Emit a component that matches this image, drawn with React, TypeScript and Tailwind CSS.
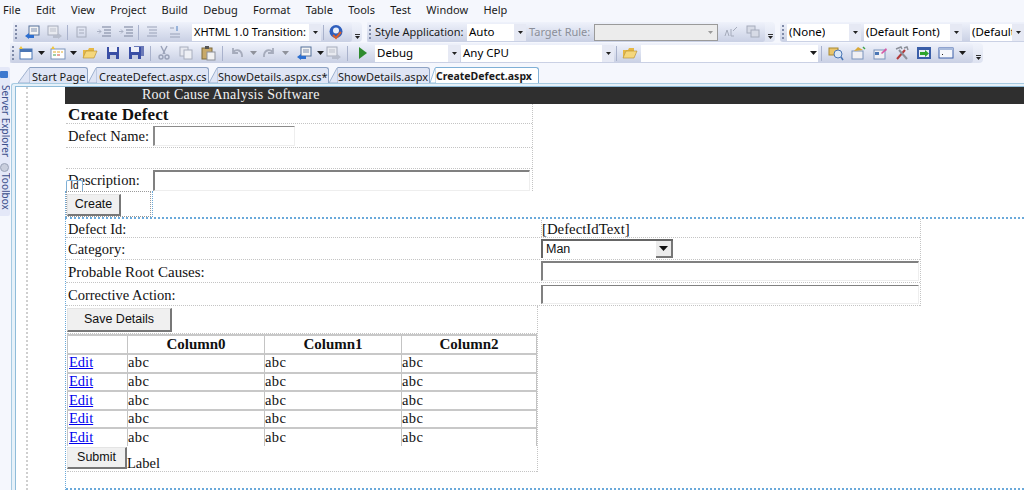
import React from 'react'

const menus = ['File', 'Edit', 'View', 'Project', 'Build', 'Debug', 'Format', 'Table', 'Tools', 'Test', 'Window', 'Help']

const tabs = [
  { label: 'Start Page', w: 'w-[70px]', slant: 12, pl: 'pl-[2px]' },
  { label: 'CreateDefect.aspx.cs', w: 'w-[121px]', slant: 9, pl: 'pl-[2px]' },
  { label: 'ShowDetails.aspx.cs*', w: 'w-[120px]', slant: 9, pl: 'pl-0' },
  { label: 'ShowDetails.aspx', w: 'w-[101px]', slant: 9, pl: 'pl-0' },
]

const rows = [0, 1, 2, 3, 4]

function Handle() {
  return <div className="w-[3px] h-[14px] mx-[2px] shrink-0 border-l-2 border-dotted border-[#7f8aa8]" />
}

function Sep({ cls = 'mx-[3px]' }: { cls?: string }) {
  return <div className={`w-px h-[15px] bg-[#a9b2cc] shrink-0 ${cls}`} />
}

function Caret() {
  return (
    <svg width="7" height="4" viewBox="0 0 7 4" className="shrink-0">
      <path d="M0 0h7L3.5 4z" fill="#1c1c1c" />
    </svg>
  )
}

function Overflow() {
  return (
    <div className="w-[10px] h-full shrink-0 flex flex-col items-center justify-end gap-[1px] pb-[3px]">
      <div className="w-[5px] h-px bg-[#333]" />
      <svg width="5" height="3" viewBox="0 0 5 3"><path d="M0 0h5L2.500 3z" fill="#222" /></svg>
    </div>
  )
}

function Strip({ w, children }: { w: string; children: React.ReactNode }) {
  return (
    <div className={`h-full rounded-r-[4px] bg-gradient-to-b from-[#f0f3fb] to-[#dde2f0] flex shrink-0 ${w}`}>
      <div className="flex-1 min-w-0 h-full rounded-[3px] bg-gradient-to-b from-[#eff2fb] to-[#c9d0e4] flex items-center">
        {children}
      </div>
      <Overflow />
    </div>
  )
}

function Combo({ text, w, color = 'text-black', size = 'text-[11.5px]' }: { text: string; w: string; color?: string; size?: string }) {
  return (
    <div className={`h-[17px] bg-white flex items-center justify-between shrink-0 ${w}`}>
      <span className={`pl-[2px] ${size} ${color} whitespace-nowrap overflow-hidden`}>{text}</span>
      <div className="w-[12px] h-[17px] bg-[#e6e9f4] flex items-center justify-center shrink-0">
        <svg width="5" height="3" viewBox="0 0 5 3"><path d="M0 0h5L2.5 3z" fill="#222" /></svg>
      </div>
    </div>
  )
}

function Ico({ children, w = 'w-[22px]' }: { children: React.ReactNode; w?: string }) {
  return (
    <div className={`h-[16px] flex items-center justify-center shrink-0 ${w}`}>
      <svg width="16" height="16" viewBox="0 0 16 16">{children}</svg>
    </div>
  )
}

const NavBack = () => (
  <>
    <rect x="5" y="2" width="10" height="9" fill="#f4f4f4" stroke="#55709a" />
    <path d="M7 5h6M7 7h6" stroke="#7c8fb0" />
    <path d="M1 12l4-3v2h5v3H5v1z" fill="#2d6fd0" />
  </>
)

const NavFwdGrey = () => (
  <>
    <rect x="1" y="2" width="10" height="9" fill="#e8eaf0" stroke="#a6acbc" />
    <path d="M3 5h6M3 7h6" stroke="#bbbfca" />
    <path d="M15 12l-4-3v2H6v3h5v1z" fill="#b7bdcc" />
  </>
)

const Indent = () => (
  <>
    <path d="M6 3h9M8 6h7M8 9h7M6 12h9" stroke="#9aa2b8" strokeWidth="1.3" />
    <path d="M1 7.500h4M3 5.500l2 2-2 2" stroke="#aab1c4" fill="none" />
  </>
)

const Lines = () => <path d="M3 3h10M5 6h8M5 9h8M3 12h10" stroke="#9aa2b8" strokeWidth="1.2" />

const Folder = () => (
  <>
    <path d="M1 5h5l1-2h5v3H4L1 13z" fill="#e6b845" />
    <path d="M1 13l3-7h11l-3 7z" fill="#f5d77c" stroke="#b68a25" strokeWidth=".6" />
  </>
)

const Floppy = ({ x = 0 }: { x?: number }) => (
  <g transform={`translate(${x} 0)`}>
    <rect x="2" y="2" width="12" height="12" fill="#3a4fa5" />
    <rect x="4" y="2" width="8" height="5" fill="#eef0f8" />
    <rect x="5" y="10" width="6" height="4" fill="#c7cde0" />
  </g>
)

function DefectPanelRow({ children, cls }: { children?: React.ReactNode; cls: string }) {
  return <div className={`flex items-center border-b border-dotted border-[#c4c4c4] ${cls}`}>{children}</div>
}

function WinButton({ label, w, h }: { label: string; w: string; h: string }) {
  return (
    <div className={`bg-[#f0f0f0] flex items-center justify-center text-[12.5px] text-[#111] font-['Liberation_Sans',sans-serif] border-t border-l border-[#e4e4e4] border-r-2 border-b-2 border-r-[#777] border-b-[#777] ${w} ${h}`}>
      {label}
    </div>
  )
}

function Cell({ children, cls = '' }: { children?: React.ReactNode; cls?: string }) {
  return <div className={`border-l border-[#c4c4c4] flex items-center ${cls}`}>{children}</div>
}

export default function App() {
  return (
    <div className="w-[1024px] h-[490px] overflow-hidden bg-[#f5f7fd] font-['Noto_Sans',sans-serif] text-[#1a1a1a] flex flex-col">
      {/* Menu */}
      <div className="h-[20px] flex items-center gap-[15.3px] pl-[3px] text-[11px] shrink-0">
        {menus.map((m) => <span key={m}>{m}</span>)}
      </div>

      {/* Toolbar row 1 */}
      <div className="h-[20px] mt-[2px] flex items-center shrink-0 pl-[13px] gap-[5px]">
        <Strip w="w-[349px]">
          <Handle />
          <Ico w="w-[24px]"><NavBack /></Ico>
          <Ico w="w-[22px]"><NavFwdGrey /></Ico>
          <Sep cls="mx-[1px]" />
          <Ico w="w-[24px]"><rect x="4" y="3" width="9" height="10" fill="none" stroke="#a6acbc" /><path d="M6 6h5M6 9h5" stroke="#a6acbc" /></Ico>
          <Ico w="w-[22px]"><Indent /></Ico>
          <Ico w="w-[22px]"><Indent /></Ico>
          <Sep cls="mx-[1px]" />
          <Ico w="w-[24px]"><Lines /></Ico>
          <Ico w="w-[22px]"><path d="M3 4h4M3 10h10M3 13h10" stroke="#9aa2b8" strokeWidth="1.2" /><path d="M10 2v5" stroke="#4c7fc0" /></Ico>
          <div className="w-[6px]" />
          <Combo text="XHTML 1.0 Transition:" w="w-[129px]" size="text-[11px]" />
          <Sep cls="mx-[2px]" />
          <Ico w="w-[20px]">
            <circle cx="8" cy="7.500" r="6.500" fill="#2f5fbd" />
            <circle cx="8" cy="6.500" r="3" fill="#e8eefa" />
            <path d="M5 11l3 3 5-6" stroke="#d8602c" strokeWidth="2" fill="none" />
          </Ico>
        </Strip>
        <Strip w="w-[408px]">
          <Handle />
          <span className="text-[11px] whitespace-nowrap w-[93px] pl-[1px]">Style Application:</span>
          <Combo text="Auto" w="w-[59px]" />
          <span className="text-[11px] text-[#8b8f99] whitespace-nowrap w-[68px] pl-[3px]">Target Rule:</span>
          <div className="w-[124px] h-[17px] bg-[#ececec] border border-[#9a9a9a] flex justify-end items-center pr-[4px] shrink-0">
            <svg width="5" height="3" viewBox="0 0 5 3"><path d="M0 0h5L2.5 3z" fill="#9a9a9a" /></svg>
          </div>
          <Ico w="w-[24px]"><path d="M3 12l2-6 2 6M9 5v7h3" stroke="#a6acbc" fill="none" /><path d="M11 7l4-4" stroke="#a6acbc" /></Ico>
          <Ico w="w-[22px]"><rect x="2" y="2" width="8" height="7" fill="#d7dbe6" stroke="#a6acbc" /><rect x="6" y="6" width="8" height="7" fill="#d7dbe6" stroke="#a6acbc" /></Ico>
        </Strip>
        <div className="h-full flex-1 rounded-l-[3px] bg-gradient-to-b from-[#eff2fb] to-[#c9d0e4] flex items-center">
          <Handle />
          <Combo text="(None)" w="w-[74px]" />
          <div className="w-[3px]" />
          <Combo text="(Default Font)" w="w-[98px]" />
          <div className="w-[8px]" />
          <Combo text="(Default" w="w-[54px]" />
        </div>
      </div>

      {/* Toolbar row 2 */}
      <div className="h-[20px] mt-[1px] ml-[10px] shrink-0">
        <Strip w="w-[973px]">
          <Handle />
          <Ico w="w-[17px]"><rect x="2" y="4" width="12" height="10" fill="#fff" stroke="#4a76b5" /><rect x="2" y="4" width="12" height="3" fill="#4a76b5" /><path d="M1 4l2-3 2 3z" fill="#efc437" /></Ico>
          <div className="w-[14px] flex justify-center"><Caret /></div>
          <Ico w="w-[20px]"><rect x="1" y="4" width="14" height="10" fill="#fff" stroke="#7a93bb" /><path d="M3 7h3M7 7h3M11 7h2" stroke="#e3a92c" /><path d="M3 10h3" stroke="#3fa34a" /><path d="M7 10h3" stroke="#d24b3f" /><path d="M1 4l2-3 2 3z" fill="#efc437" /></Ico>
          <div className="w-[11px] flex justify-center"><Caret /></div>
          <Ico w="w-[22px]"><Folder /></Ico>
          <Ico w="w-[24px]"><Floppy /></Ico>
          <Ico w="w-[23px]"><rect x="5" y="1" width="10" height="10" fill="#6a79b8" /><Floppy x={-2} /></Ico>
          <Sep cls="mx-[2px]" />
          <Ico w="w-[22px]"><path d="M5 1l4 8M11 1L7 9" stroke="#9aa2b8" strokeWidth="1.4" /><circle cx="5" cy="12" r="2" fill="none" stroke="#9aa2b8" strokeWidth="1.4" /><circle cx="11" cy="12" r="2" fill="none" stroke="#9aa2b8" strokeWidth="1.4" /></Ico>
          <Ico w="w-[21px]"><rect x="2" y="2" width="8" height="9" fill="#e7e9f0" stroke="#a8aebd" /><rect x="6" y="5" width="8" height="9" fill="#eef0f5" stroke="#a8aebd" /></Ico>
          <Ico w="w-[23px]"><rect x="2" y="3" width="10" height="11" fill="#c8a969" stroke="#7d6a3d" /><rect x="5" y="1" width="4" height="3" fill="#555" /><rect x="7" y="7" width="8" height="8" fill="#f2f2f2" stroke="#8b8f99" /></Ico>
          <Sep cls="mx-[3px]" />
          <Ico w="w-[22px]"><path d="M4 3v5h5M4 8c2-4 8-4 9 2v2" fill="none" stroke="#a6acbc" strokeWidth="1.8" /></Ico>
          <div className="w-[10px] flex justify-center opacity-40"><Caret /></div>
          <Ico w="w-[21px]"><path d="M12 3v5H7M12 8c-2-4-8-4-9 2v2" fill="none" stroke="#a6acbc" strokeWidth="1.8" /></Ico>
          <div className="w-[13px] flex justify-center opacity-40"><Caret /></div>
          <Ico w="w-[24px]"><NavBack /></Ico>
          <div className="w-[8px] flex justify-center"><Caret /></div>
          <Ico w="w-[20px]"><NavFwdGrey /></Ico>
          <Sep cls="ml-[3px] mr-[1px]" />
          <Ico w="w-[26px]"><path d="M5 2l8 6-8 6z" fill="#2e8b2e" /></Ico>
          <Combo text="Debug" w="w-[85px]" />
          <div className="w-px" />
          <Combo text="Any CPU" w="w-[153px]" />
          <Sep cls="mx-[2px]" />
          <Ico w="w-[22px]"><Folder /></Ico>
          <div className="h-[17px] w-[177px] bg-white flex items-center justify-end shrink-0">
            <div className="w-[10px] flex justify-center"><Caret /></div>
          </div>
          <Sep cls="mx-[3px]" />
          <Ico w="w-[22px]"><rect x="1" y="3" width="9" height="7" fill="#e9c46a" stroke="#a98a32" /><circle cx="10" cy="9" r="4" fill="#dbe8f6" stroke="#4a76b5" /><path d="M13 12l2 3" stroke="#4a76b5" strokeWidth="1.5" /></Ico>
          <Ico w="w-[22px]"><rect x="2" y="6" width="11" height="8" fill="#f0f0f4" stroke="#7a93bb" /><path d="M4 6l4-4 5 3" fill="#d9a93a" /><path d="M13 2l2 2" stroke="#3fa34a" strokeWidth="1.5" /></Ico>
          <Ico w="w-[22px]"><rect x="2" y="5" width="11" height="9" fill="#f0f0f4" stroke="#7a93bb" /><path d="M3 7h4v3H3z" fill="#4a76b5" /><path d="M9 8l5-5 1 2-5 4z" fill="#d55aa5" /></Ico>
          <Ico w="w-[22px]"><path d="M3 14l8-9" stroke="#b33a3a" strokeWidth="2" /><path d="M13 14L5 5" stroke="#8b8f99" strokeWidth="2" /><path d="M2 4l5-2 1 2M10 3l3-1 1 3" stroke="#8b8f99" fill="none" strokeWidth="1.4" /></Ico>
          <Ico w="w-[22px]"><rect x="1" y="2" width="14" height="12" fill="#3a5ea8" /><rect x="3" y="5" width="10" height="7" fill="#e9eef8" /><path d="M4 7h5V5l4 3.500-4 3.500V10H4z" fill="#2ea52e" /></Ico>
          <Ico w="w-[22px]"><rect x="1" y="3" width="14" height="10" fill="#f5f7fc" stroke="#3a5ea8" /><path d="M1 3h14v2H1z" fill="#a9bbdc" /><path d="M4 9h1v1H4z" fill="#222" /></Ico>
          <div className="w-[11px] flex justify-center"><Caret /></div>
        </Strip>
      </div>

      <div className="flex-1 flex min-h-0 mt-[4px]">
        {/* Docked panes */}
        <div className="w-[10px] h-[149px] shrink-0 bg-[#e4e8f8] rounded-r-[2px] flex flex-col overflow-hidden text-[10px] leading-[9px] text-[#3b4f8c]">
          <div className="h-[18px] shrink-0 pt-[4px]">
            <div className="w-[8px] h-[7px] bg-[#3d78cf] rounded-[1px]" />
          </div>
          <span className="h-[78px] whitespace-nowrap [writing-mode:vertical-rl]">Server Explorer</span>
          <div className="w-[9px] h-[9px] rounded-full bg-[#c9cedd] border border-[#9aa2b8] shrink-0" />
          <span className="pt-[1px] whitespace-nowrap [writing-mode:vertical-rl]">Toolbox</span>
        </div>

        <div className="flex-1 min-w-0 flex flex-col pl-px">
          {/* Tabs */}
          <div className="relative z-10 h-[16px] pl-[7px] flex items-end shrink-0 text-[11px]">
            {tabs.map((t) => (
              <div key={t.label} className={`h-[16px] flex items-end shrink-0 ${t.w}`}>
                <svg width={t.slant} height="16" viewBox={`0 0 ${t.slant} 16`} className="shrink-0">
                  <path d={`M0 16L${t.slant - 1} 1q.5-.5 1-.5V16z`} fill="#dfe5f5" stroke="#8ea3c4" strokeWidth=".8" />
                </svg>
                <div className={`flex-1 min-w-0 h-[16px] bg-[#dfe5f5] border-t border-r border-[#8ea3c4] rounded-tr-[3px] whitespace-nowrap leading-[17px] ${t.pl}`}>
                  {t.label}
                </div>
              </div>
            ))}
            <div className="h-[16px] w-[109px] flex items-end shrink-0">
              <svg width="6" height="16" viewBox="0 0 6 16" className="shrink-0">
                <path d="M0 16L5 1q.5-.5 1-.5V16z" fill="#fff" stroke="#7fb0d6" strokeWidth=".8" />
              </svg>
              <div className="flex-1 min-w-0 h-[16px] bg-white border-t border-r border-[#7fb0d6] rounded-tr-[3px] font-bold text-[10.5px] whitespace-nowrap leading-[17px]">
                CreateDefect.aspx
              </div>
            </div>
          </div>

          {/* Editor frame */}
          <div className="flex-1 min-h-0 flex border-t border-l border-[#a7cbe2] rounded-tl-[3px] bg-[#e6f1f9] pl-[3px] pt-[2px]">
            <div className="flex-1 min-w-0 border-t border-l border-[#8fbcd9] bg-white pl-[10px]">
              {/* Design surface */}
              <div className="h-full border-l-2 border-dotted border-[#cfcfcf] pl-[37px] font-['Liberation_Serif',serif] text-[14.5px] text-[#111]">
                <div className="h-[17px] bg-[#2f2f2f] text-[#f2f2f2] text-[14px] pl-[77px] leading-[16px] whitespace-nowrap tracking-[0.25px]">Root Cause Analysis Software</div>

                {/* Create defect table */}
                <div className="w-[467px] ml-[1px] border-r border-dotted border-[#c4c4c4]">
                  <DefectPanelRow cls="h-[20px] pl-[2px] pt-[3px] font-bold text-[17px] tracking-[0.1px]">Create Defect</DefectPanelRow>
                  <DefectPanelRow cls="h-[24px] pl-[2px]">
                    <span className="w-[85px] pt-[3px] whitespace-nowrap">Defect Name:</span>
                    <div className="w-[142px] h-[20px] border-l-2 border-t border-[#8a8a8a] border-r border-b border-r-[#eeeeee] border-b-[#eeeeee]" />
                  </DefectPanelRow>
                  <DefectPanelRow cls="h-[21px]" />
                  <div className="h-[22px] flex pl-[2px] relative">
                    <span className="w-[85px] leading-[18px] mt-[2px]">Description:</span>
                    <div className="w-[377px] h-[21px] mt-[1px] border-l-2 border-t-2 border-[#808080] border-r border-b border-r-[#eeeeee] border-b-[#eeeeee]" />
                    <div className="absolute left-0 top-[11px] w-[17px] h-[11px] bg-white border border-b-0 border-[#7fb0d6] rounded-t-[2px] text-[10px] leading-[10px] text-center font-['Liberation_Sans',sans-serif]">Id</div>
                  </div>
                </div>

                {/* Button panel */}
                <div className="w-[88px] h-[26px] border-l border-r border-dotted border-[#6aa9da]">
                  <div className="h-[26px] w-[85px] border border-dotted border-[#9a9a9a] flex items-end">
                    <WinButton label="Create" w="w-[54px]" h="h-[22px]" />
                  </div>
                </div>

                {/* Details panel */}
                <div className="h-[273px] border-t-2 border-l border-dotted border-[#6aa9da] relative">
                  <div className="w-[855px] h-[87px] pt-[1px] border-r border-dotted border-[#c4c4c4]">
                    <DefectPanelRow cls="h-[18px] pl-[2px]">
                      <span className="w-[473px] pt-[2px]">Defect Id:</span>
                      <span className="border-l border-dotted border-[#c4c4c4] h-full leading-[18px] text-[14.8px]">[DefectIdText]</span>
                    </DefectPanelRow>
                    <DefectPanelRow cls="h-[22px] pl-[2px]">
                      <span className="w-[473px] pt-[2px]">Category:</span>
                      <div className="w-[132px] h-[19px] border-l-2 border-t-2 border-[#666] flex items-center justify-between font-['Liberation_Sans',sans-serif] text-[12.5px]">
                        <span className="pl-[3px]">Man</span>
                        <div className="w-[17px] h-[17px] bg-[#ececec] border-r-2 border-b-2 border-[#777] flex items-center justify-center">
                          <svg width="9" height="5" viewBox="0 0 9 5"><path d="M0 0h9L4.500 5z" fill="#111" /></svg>
                        </div>
                      </div>
                    </DefectPanelRow>
                    <DefectPanelRow cls="h-[23px] pl-[2px]">
                      <span className="w-[473px] pt-[2px] text-[15px]">Probable Root Causes:</span>
                      <div className="w-[378px] h-[20px] border-l-2 border-t-2 border-[#808080] border-r border-b border-r-[#eeeeee] border-b-[#eeeeee]" />
                    </DefectPanelRow>
                    <DefectPanelRow cls="h-[23px] pl-[2px]">
                      <span className="w-[473px] pt-[4px]">Corrective Action:</span>
                      <div className="w-[378px] h-[19px] border-l-2 border-t border-[#808080] border-r border-b border-r-[#eeeeee] border-b-[#eeeeee]" />
                    </DefectPanelRow>
                  </div>

                  {/* Save button and grid */}
                  <div className="w-[472px] border-r border-dotted border-[#c4c4c4] pl-px">
                    <div className="h-[27px] pt-[2px]">
                      <WinButton label="Save Details" w="w-[105px]" h="h-[24px]" />
                    </div>
                    <div className="w-[470px] border-t border-dotted border-[#c4c4c4]">
                      <div className="grid grid-cols-[60px_137px_137px_135px] border-t-2 border-r border-t-[#c8c8c8] border-r-[#c4c4c4]">
                        <Cell cls="h-[17px]" />
                        {['Column0', 'Column1', 'Column2'].map((c) => (
                          <Cell key={c} cls="h-[17px] justify-center font-bold text-[15px]">{c}</Cell>
                        ))}
                        {rows.map((r) => (
                          <React.Fragment key={r}>
                            <Cell cls="h-[18.6px] border-t-2 border-t-[#c8c8c8]"><a href="#" className="text-[#0000ee] underline pl-px">Edit</a></Cell>
                            <Cell cls="h-[18.6px] border-t-2 border-t-[#c8c8c8] tracking-[0.4px]">abc</Cell>
                            <Cell cls="h-[18.6px] border-t-2 border-t-[#c8c8c8] tracking-[0.4px]">abc</Cell>
                            <Cell cls="h-[18.6px] border-t-2 border-t-[#c8c8c8] tracking-[0.4px]">abc</Cell>
                          </React.Fragment>
                        ))}
                      </div>
                      <div className="flex items-end h-[26px] border-b border-dotted border-[#c4c4c4]">
                        <div className="self-start mt-px"><WinButton label="Submit" w="w-[60px]" h="h-[22px]" /></div>
                        <span className="leading-[15px]">Label</span>
                      </div>
                    </div>
                  </div>
                  <div className="absolute left-0 right-0 bottom-0 border-b-2 border-dotted border-[#6aa9da]" />
                </div>
              </div>
            </div>
          </div>
        </div>
      </div>
    </div>
  )
}
